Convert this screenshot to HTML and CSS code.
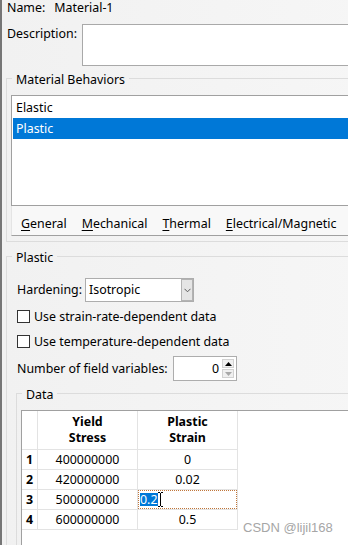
FILE: index.html
```html
<!DOCTYPE html>
<html>
<head>
<meta charset="utf-8">
<link rel="stylesheet" href="styles.css">
</head>
<body>
<div class="window">
  <div class="name-row"><span>Name:</span><span>Material-1</span></div>
  <div class="desc-row"><span class="desc-label">Description:</span><div class="desc-box"></div></div>

  <fieldset class="group behaviors">
    <legend>Material Behaviors</legend>
    <div class="listbox">
      <div class="item">Elastic</div>
      <div class="item selected">Plastic</div>
    </div>
    <div class="menubar">
      <span><u>G</u>eneral</span>
      <span><u>M</u>echanical</span>
      <span><u>T</u>hermal</span>
      <span><u>E</u>lectrical/Magnetic</span>
    </div>
  </fieldset>

  <fieldset class="group plastic">
    <legend>Plastic</legend>
    <div class="row hardening">
      <span class="lbl-hard">Hardening:</span>
      <div class="combo">
        <span class="combo-text">Isotropic</span>
        <span class="drop"><svg width="7" height="5" viewBox="0 0 7 5"><polyline points="0.5,0.8 3.5,3.8 6.5,0.8" fill="none" stroke="#5a5a5a" stroke-width="1"/></svg></span>
      </div>
    </div>
    <div class="check first"><span class="box"></span><span>Use strain-rate-dependent data</span></div>
    <div class="check"><span class="box"></span><span>Use temperature-dependent data</span></div>
    <div class="row fields">
      <span class="lbl-fields">Number of field variables:</span>
      <div class="spin">
        <span class="val">0</span>
        <span class="btns">
          <span class="sbtn"><svg width="7" height="4" viewBox="0 0 7 4"><polygon points="0,4 3.5,0 7,4" fill="#000"/></svg></span>
          <span class="sbtn"><svg width="7" height="4" viewBox="0 0 7 4"><polygon points="0,0 3.5,4 7,0" fill="#a8a8a8"/></svg></span>
        </span>
      </div>
    </div>

    <fieldset class="group data">
      <legend>Data</legend>
      <div class="grid-wrap">
        <table class="grid">
          <thead>
            <tr><th class="rn"></th><th class="c">Yield<br>Stress</th><th class="c">Plastic<br>Strain</th></tr>
          </thead>
          <tbody>
            <tr><td class="rn">1</td><td>400000000</td><td>0</td></tr>
            <tr><td class="rn">2</td><td>420000000</td><td>0.02</td></tr>
            <tr><td class="rn">3</td><td>500000000</td><td class="edit"><div class="editor"><span class="sel">0.2</span><svg class="ibeam" width="5" height="15" viewBox="0 0 5 15"><path d="M0 0.5H2M3 0.5H5M0 14.5H2M3 14.5H5M2.5 1V14" stroke="#000" stroke-width="1" fill="none"/></svg></div></td></tr>
            <tr><td class="rn">4</td><td>600000000</td><td>0.5</td></tr>
          </tbody>
        </table>
      </div>
    </fieldset>
  </fieldset>

  <div class="watermark">CSDN @lijil168</div>
</div>
</body>
</html>
```

FILE: styles.css
```css
* { box-sizing: border-box; }
html, body {
  margin: 0;
  padding: 0;
  overflow: hidden;
}
body {
  width: 348px;
  height: 545px;
  background: #f3f3f3;
  font-family: "Noto Sans", "Liberation Sans", sans-serif;
  font-size: 12.4px;
  line-height: 16px;
  color: #000;
}
.window {
  position: relative;
  width: 440px;
  height: 545px;
  border-left: 2px solid #767676;
  background: linear-gradient(to right, #f1f1f1, #f7f7f7);
}
.name-row {
  display: flex;
  gap: 9px;
  padding-left: 5px;
  height: 16px;
}
.desc-row {
  display: flex;
  margin-top: 8px;
  padding-left: 5px;
}
.desc-label {
  width: 75px;
  margin-top: 2px;
}
.desc-box {
  flex: 1;
  height: 42px;
  border: 1px solid #a9a9a9;
  background: #fff;
}
.group {
  border: 1px solid #dcdcdc;
  margin: 0 0 0 4px;
  padding: 0;
  min-width: 0;
}
.group > legend {
  margin-left: 5px;
  padding: 4px 4px 0;
  line-height: 16px;
}
.behaviors {
  margin-top: 2px;
  padding-bottom: 5px;
}
.listbox {
  margin: 7px 0 0 4px;
  height: 111px;
  border: 1px solid #a0a0a0;
  background: #fff;
  padding: 1px;
}
.item {
  height: 21px;
  line-height: 21px;
  padding-left: 3px;
}
.item.selected {
  background: #0078d7;
  color: #fff;
}
.menubar {
  margin-left: 4px;
  height: 30px;
  padding: 10px 0 0 9px;
  border-left: 1px solid #e4e4e4;
  border-bottom: 1px solid #a0a0a0;
  background: #f8f8f8;
  display: flex;
  gap: 15px;
}
.menubar u {
  text-underline-offset: 2px;
}
.plastic {
  margin-top: 4px;
  height: 400px;
}
.row {
  display: flex;
  align-items: center;
  margin-left: 10px;
}
.hardening {
  margin-top: 12px;
  height: 24px;
}
.lbl-hard {
  width: 68px;
}
.combo {
  width: 109px;
  height: 24px;
  border: 1px solid #adadad;
  background: #fff;
  display: flex;
  align-items: center;
}
.combo-text {
  flex: 1;
  padding-left: 3px;
}
.drop {
  width: 12px;
  height: 22px;
  border: 1px solid #b3b3b3;
  background: #e5e5e5;
  display: flex;
  align-items: center;
  justify-content: center;
}
.check {
  display: flex;
  align-items: center;
  gap: 4px;
  height: 25px;
  margin-left: 10px;
}
.check.first {
  margin-top: 2px;
}
.box {
  width: 13px;
  height: 13px;
  border: 1px solid #333;
  background: #fff;
}
.fields {
  margin-top: 2px;
  height: 25px;
}
.lbl-fields {
  width: 156px;
}
.spin {
  width: 64px;
  height: 25px;
  border: 1px solid #adadad;
  background: #fff;
  display: flex;
}
.val {
  flex: 1;
  text-align: right;
  line-height: 23px;
  padding-right: 3px;
}
.btns {
  width: 12px;
  margin: 2px 2px 2px 0;
  display: flex;
  flex-direction: column;
  gap: 1px;
}
.sbtn {
  flex: 1;
  border: 1px solid #d2d2d2;
  background: #f0f0f0;
  display: flex;
  align-items: center;
  justify-content: center;
}
.data {
  margin: 2px 0 0 9px;
  height: 300px;
}
.grid-wrap {
  margin: 7px 0 0 4px;
  height: 250px;
  border-top: 1px solid #a0a0a0;
  border-left: 1px solid #a0a0a0;
  background: #fff;
}
.grid {
  border-collapse: separate;
  border-spacing: 0;
  table-layout: fixed;
  width: 216px;
}
.grid th, .grid td {
  padding: 0;
  border-right: 1px solid #e3e3e3;
  border-bottom: 1px solid #e3e3e3;
  text-align: center;
  font-weight: normal;
}
.grid th {
  height: 39px;
  font-weight: bold;
  line-height: 16px;
  width: 100px;
}
.grid th.rn {
  width: 16px;
}
.grid td {
  height: 20px;
  line-height: 19px;
}
.grid td.rn {
  font-weight: bold;
}
.grid td.edit {
  text-align: left;
}
.editor {
  height: 19px;
  border: 1px dotted #c0763a;
  display: flex;
  align-items: center;
  padding-left: 1px;
}
.sel {
  background: #0078d7;
  color: #fff;
  line-height: 13px;
  height: 13px;
}
.ibeam {
  display: block;
}
.watermark {
  position: absolute;
  left: 241px;
  top: 519px;
  font-family: "Liberation Sans", Arial, sans-serif;
  font-size: 13px;
  line-height: 18px;
  color: #a6a6a6;
}
```
